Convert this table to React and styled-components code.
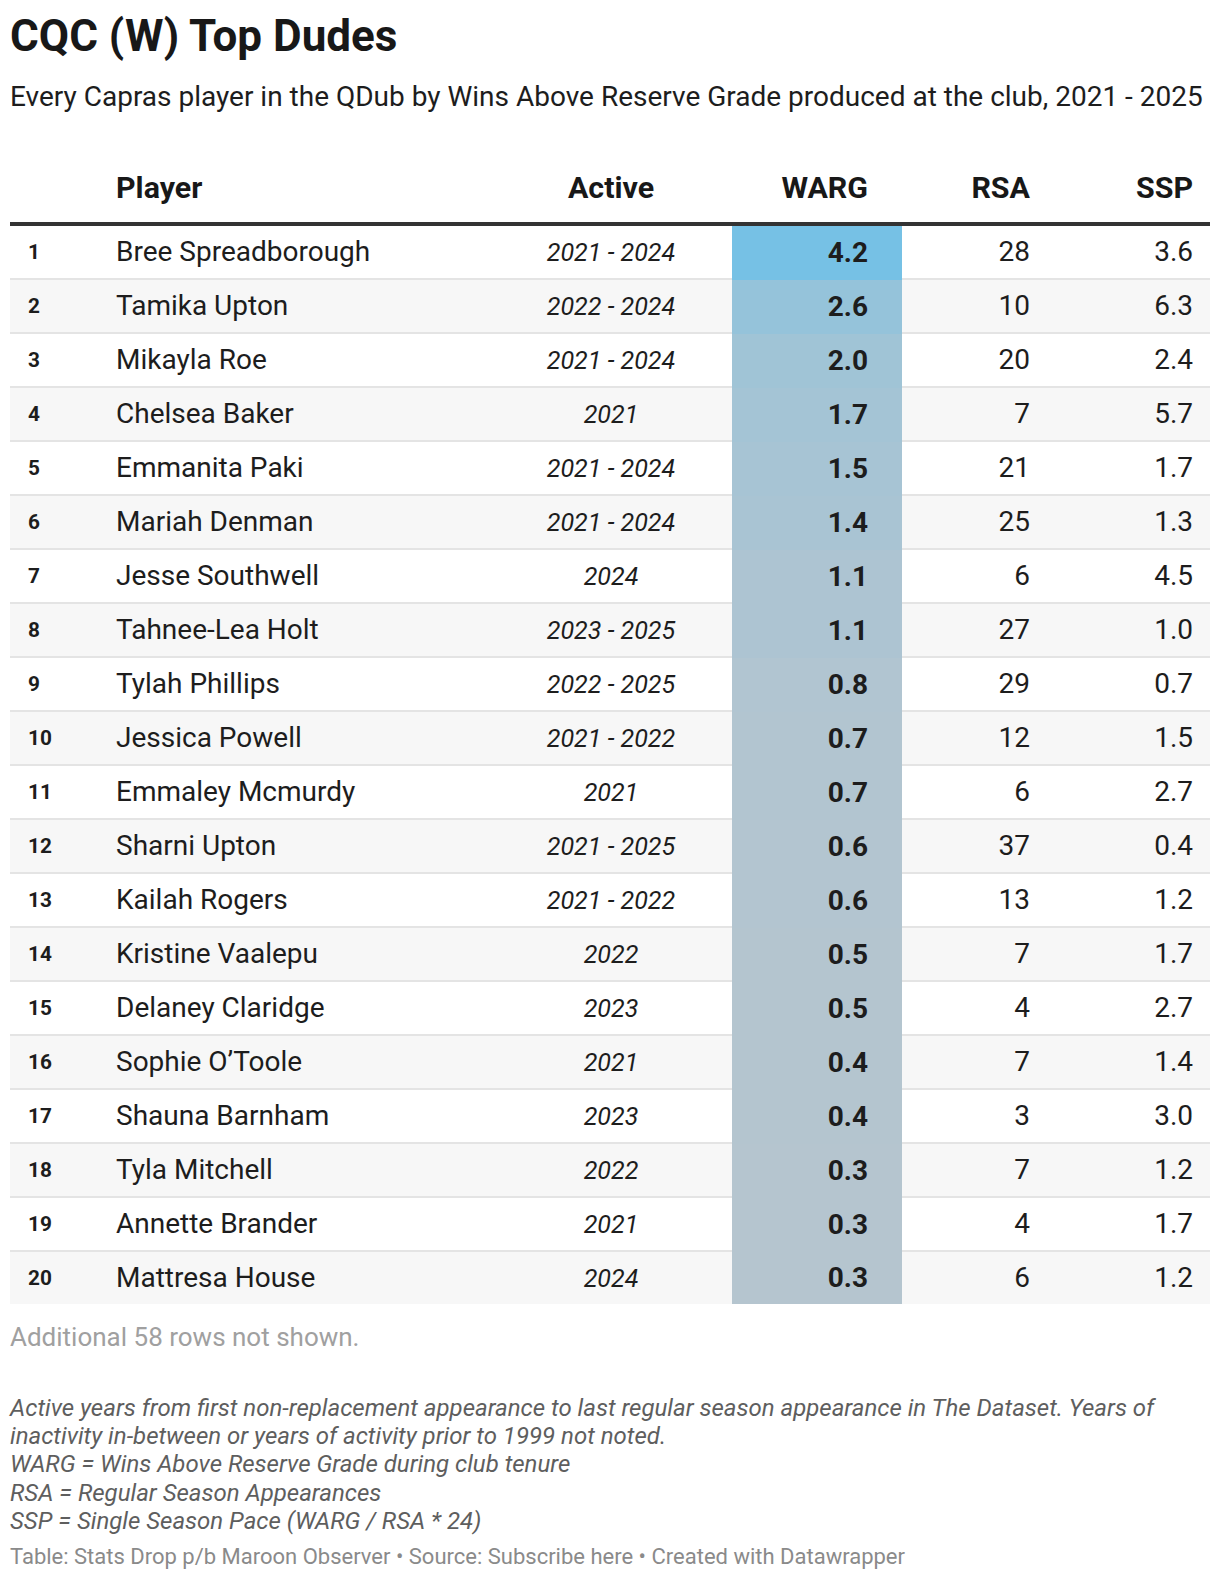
import React from "react";
import styled, { createGlobalStyle } from "styled-components";

const players = [
	{ name: "Bree Spreadborough", active: "2021 - 2024", warg: 4.2, rsa: 28, ssp: "3.6" },
	{ name: "Tamika Upton", active: "2022 - 2024", warg: 2.6, rsa: 10, ssp: "6.3" },
	{ name: "Mikayla Roe", active: "2021 - 2024", warg: 2.0, rsa: 20, ssp: "2.4" },
	{ name: "Chelsea Baker", active: "2021", warg: 1.7, rsa: 7, ssp: "5.7" },
	{ name: "Emmanita Paki", active: "2021 - 2024", warg: 1.5, rsa: 21, ssp: "1.7" },
	{ name: "Mariah Denman", active: "2021 - 2024", warg: 1.4, rsa: 25, ssp: "1.3" },
	{ name: "Jesse Southwell", active: "2024", warg: 1.1, rsa: 6, ssp: "4.5" },
	{ name: "Tahnee-Lea Holt", active: "2023 - 2025", warg: 1.1, rsa: 27, ssp: "1.0" },
	{ name: "Tylah Phillips", active: "2022 - 2025", warg: 0.8, rsa: 29, ssp: "0.7" },
	{ name: "Jessica Powell", active: "2021 - 2022", warg: 0.7, rsa: 12, ssp: "1.5" },
	{ name: "Emmaley Mcmurdy", active: "2021", warg: 0.7, rsa: 6, ssp: "2.7" },
	{ name: "Sharni Upton", active: "2021 - 2025", warg: 0.6, rsa: 37, ssp: "0.4" },
	{ name: "Kailah Rogers", active: "2021 - 2022", warg: 0.6, rsa: 13, ssp: "1.2" },
	{ name: "Kristine Vaalepu", active: "2022", warg: 0.5, rsa: 7, ssp: "1.7" },
	{ name: "Delaney Claridge", active: "2023", warg: 0.5, rsa: 4, ssp: "2.7" },
	{ name: "Sophie O\u2019Toole", active: "2021", warg: 0.4, rsa: 7, ssp: "1.4" },
	{ name: "Shauna Barnham", active: "2023", warg: 0.4, rsa: 3, ssp: "3.0" },
	{ name: "Tyla Mitchell", active: "2022", warg: 0.3, rsa: 7, ssp: "1.2" },
	{ name: "Annette Brander", active: "2021", warg: 0.3, rsa: 4, ssp: "1.7" },
	{ name: "Mattresa House", active: "2024", warg: 0.3, rsa: 6, ssp: "1.2" },
];

// heatmap from grey-blue (low) to sky blue (high)
const LOW = [181, 197, 207];
const HIGH = [118, 193, 229];
const heatColor = (v) => {
	const t = Math.pow(Math.max(0, Math.min(1, (v - 0.3) / 3.9)), 1.3);
	const c = LOW.map((l, i) => Math.round(l + (HIGH[i] - l) * t));
	return `rgb(${c.join(",")})`;
};

const COLUMNS = "88px 392px 242px 170px 145px 163px";

const GlobalStyle = createGlobalStyle`
	body {
		margin: 0;
		background: #ffffff;
		font-family: Roboto, "Liberation Sans", sans-serif;
		color: #1d1d1d;
	}
`;

const Page = styled.div`
	width: 1200px;
	padding: 9.5px 10px 10px;
`;

const Title = styled.h1`
	margin: 0;
	font-size: 44px;
	line-height: 1.2;
	font-weight: 700;
	color: #181818;
`;

const Subtitle = styled.p`
	margin: 17px 0 0;
	font-size: 28px;
	line-height: 1.3;
	color: #1d1d1d;
`;

const Table = styled.div`
	margin-top: 54px;
`;

const HeadRow = styled.div`
	display: grid;
	grid-template-columns: ${COLUMNS};
	align-items: end;
	padding-bottom: 15.8px;
	border-bottom: 4px solid #333333;
`;

const Th = styled.div`
	padding: 0 ${(p) => p.$pr || 0}px 0 ${(p) => p.$pl || 0}px;
	font-size: 30.4px;
	line-height: 1.2;
	font-weight: 700;
	color: #181818;
	text-align: ${(p) => p.$align};
`;

const Row = styled.div`
	display: grid;
	grid-template-columns: ${COLUMNS};
	height: 52px;
	background: ${(p) => (p.$striped ? "#f7f7f7" : "#ffffff")};
	border-bottom: ${(p) => (p.$last ? "none" : "2px solid #e4e4e4")};
`;

const Cell = styled.div`
	display: flex;
	align-items: center;
	justify-content: ${(p) =>
		p.$align === "right" ? "flex-end" : p.$align === "center" ? "center" : "flex-start"};
	padding: 0 ${(p) => p.$pr || 0}px 0 ${(p) => p.$pl || 0}px;
	font-size: 28px;
	line-height: 1.2;
	white-space: nowrap;
	color: #1d1d1d;
`;

const RankCell = styled(Cell)`
	font-size: 20.8px;
	font-weight: 700;
	padding-top: 1px;
`;

const ActiveCell = styled(Cell)`
	font-style: italic;
	font-size: 25.1px;
	padding-top: 3px;
`;

const WargCell = styled(Cell)`
	font-weight: 700;
	background: ${(p) => p.$bg};
	height: calc(100% + ${(p) => (p.$last ? 0 : 2)}px);
`;

const Hidden = styled.p`
	margin: 17.5px 0 0;
	font-size: 26px;
	line-height: 1.3;
	color: #a0a0a0;
`;

const Notes = styled.p`
	margin: 39px 0 0;
	font-size: 24px;
	line-height: 28.1px;
	font-style: italic;
	color: #5e5e5e;
`;

const Footer = styled.p`
	margin: 8px 0 0;
	font-size: 22px;
	line-height: 1.3;
	color: #8a8a8a;
`;

export default function App() {
	return (
		<Page>
			<GlobalStyle />
			<Title>CQC (W) Top Dudes</Title>
			<Subtitle>
				Every Capras player in the QDub by Wins Above Reserve Grade produced at the
				club, 2021 - 2025
			</Subtitle>
			<Table>
				<HeadRow>
					<Th $align="left" />
					<Th $align="left" $pl={18}>
						Player
					</Th>
					<Th $align="center">Active</Th>
					<Th $align="right" $pr={34}>
						WARG
					</Th>
					<Th $align="right" $pr={17}>
						RSA
					</Th>
					<Th $align="right" $pr={17}>
						SSP
					</Th>
				</HeadRow>
				{players.map((p, i) => {
					const last = i === players.length - 1;
					return (
						<Row key={p.name} $striped={i % 2 === 1} $last={last}>
							<RankCell $pl={18}>{i + 1}</RankCell>
							<Cell $pl={18}>{p.name}</Cell>
							<ActiveCell $align="center">{p.active}</ActiveCell>
							<WargCell $align="right" $pr={34} $bg={heatColor(p.warg)} $last={last}>
								{p.warg.toFixed(1)}
							</WargCell>
							<Cell $align="right" $pr={17}>
								{p.rsa}
							</Cell>
							<Cell $align="right" $pr={17}>
								{p.ssp}
							</Cell>
						</Row>
					);
				})}
			</Table>
			<Hidden>Additional 58 rows not shown.</Hidden>
			<Notes>
				Active years from first non-replacement appearance to last regular season
				appearance in The Dataset. Years of inactivity in-between or years of activity
				prior to 1999 not noted.
				<br />
				WARG = Wins Above Reserve Grade during club tenure
				<br />
				RSA = Regular Season Appearances
				<br />
				SSP = Single Season Pace (WARG / RSA * 24)
			</Notes>
			<Footer>
				Table: Stats Drop p/b Maroon Observer • Source: Subscribe here • Created with
				Datawrapper
			</Footer>
		</Page>
	);
}
